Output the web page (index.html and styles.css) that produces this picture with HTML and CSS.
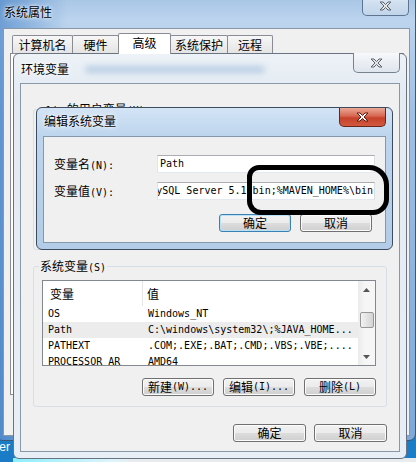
FILE: index.html
```html
<!DOCTYPE html>
<html lang="zh-CN">
<head>
    <meta charset="UTF-8">
    <title>编辑系统变量</title>
    <link rel="stylesheet" href="styles.css">
</head>
<body>
    <span class="desk-label">Computer</span>
    <div class="desk-foot"></div>

    <div class="win win-sys">
        <div class="titlebar">
            <span class="title">系统属性</span>
            <span class="close"><svg width="13" height="10" viewBox="0 0 13 10"><path d="M1 1h3l2.5 2.5L9 1h3L8 5l4 4H9L6.5 6.5 4 9H1l4-4z"/></svg></span>
        </div>
        <div class="client">
            <div class="tabs">
                <span class="tab t1">计算机名</span>
                <span class="tab t2">硬件</span>
                <span class="tab t3 active">高级</span>
                <span class="tab t4">系统保护</span>
                <span class="tab t5">远程</span>
            </div>
            <div class="tab-panel"></div>
        </div>
    </div>

    <div class="win win-env">
        <div class="titlebar">
            <span class="title">环境变量</span>
            <span class="smear"></span>
            <span class="close"><svg width="13" height="10" viewBox="0 0 13 10"><path d="M1 1h3l2.5 2.5L9 1h3L8 5l4 4H9L6.5 6.5 4 9H1l4-4z"/></svg></span>
        </div>
        <div class="client">
            <fieldset class="group group-user">
                <legend><span class="m">alin</span> 的用户变量<span class="m">(U)</span></legend>
            </fieldset>
            <fieldset class="group group-sys">
                <legend>系统变量<span class="m">(S)</span></legend>
                <div class="list">
                    <div class="grid">
                        <div class="head"><span>变量</span><span>值</span></div>
                        <div class="row m"><span>OS</span><span>Windows_NT</span></div>
                        <div class="row m sel"><span>Path</span><span>C:\windows\system32\;%JAVA_HOME...</span></div>
                        <div class="row m"><span>PATHEXT</span><span>.COM;.EXE;.BAT;.CMD;.VBS;.VBE;....</span></div>
                        <div class="row m"><span>PROCESSOR_AR</span><span>AMD64</span></div>
                    </div>
                    <div class="scrollbar">
                        <span class="sb-btn"><svg width="7" height="4" viewBox="0 0 7 4"><path d="M0 4L3.5 0 7 4z"/></svg></span>
                        <span class="sb-thumb"></span>
                        <span class="sb-btn"><svg width="7" height="4" viewBox="0 0 7 4"><path d="M0 0h7L3.5 4z"/></svg></span>
                    </div>
                </div>
                <div class="btn-row">
                    <span class="btn">新建<span class="m">(W)...</span></span>
                    <span class="btn">编辑<span class="m">(I)...</span></span>
                    <span class="btn">删除<span class="m">(L)</span></span>
                </div>
            </fieldset>
            <div class="btn-row dlg-btns">
                <span class="btn">确定</span>
                <span class="btn">取消</span>
            </div>
        </div>
    </div>

    <div class="win win-edit">
        <div class="titlebar">
            <span class="title">编辑系统变量</span>
            <span class="close close-red"><svg width="13" height="10" viewBox="0 0 13 10"><path d="M1 1h3l2.5 2.5L9 1h3L8 5l4 4H9L6.5 6.5 4 9H1l4-4z"/></svg></span>
        </div>
        <div class="client">
            <div class="field">
                <span class="label">变量名<span class="m">(N):</span></span>
                <div class="input m"><span>Path</span></div>
            </div>
            <div class="field">
                <span class="label">变量值<span class="m">(V):</span></span>
                <div class="input input-end m"><span>C:\Program Files\MySQL\MySQL Server 5.1\bin;%MAVEN_HOME%\bin</span></div>
            </div>
            <div class="btn-row edit-btns">
                <span class="btn btn-default">确定</span>
                <span class="btn">取消</span>
            </div>
        </div>
    </div>

    <div class="mark"></div>
</body>
</html>
```

FILE: styles.css
```css
* { margin: 0; padding: 0; box-sizing: border-box; }
body { width: 416px; height: 462px; overflow: hidden; position: relative; background: linear-gradient(#2b8fd8, #1a7cc6); font: 12px/14px "Noto Sans CJK SC", sans-serif; color: #000; }
.m { font: 10px/12px "DejaVu Sans Mono", monospace; }

.desk-label { position: absolute; right: 406px; top: 440px; color: #fff; font: 12px/14px "Liberation Sans", sans-serif; white-space: nowrap; }
.desk-foot { position: absolute; left: 13px; right: 0; bottom: 0; height: 4px; background: linear-gradient(90deg, #8befff, #dff4fb 25%, #e8ecef 30%, #e8ecef); }

/* windows */
.win { position: absolute; display: flex; flex-direction: column; border: 1px solid #4f5b68; border-radius: 7px; }
.titlebar { display: flex; align-items: flex-start; flex-shrink: 0; }
.title { text-shadow: 0 0 6px #fff, 0 0 3px #fff; white-space: nowrap; }
.close { margin-left: auto; width: 47px; height: 20px; display: flex; align-items: center; justify-content: center; border: 1px solid #77838f; border-top: none; border-radius: 0 0 5px 5px; background: linear-gradient(#f6f8fb, #dfe5ec); }
.close svg path { fill: #e4e4e4; stroke: #5e6570; stroke-width: 1; }
.client { flex: 1; background: #f0f0f0; border: 1px solid #8a97a6; }

/* back window: system properties */
.win-sys { left: -4px; top: -10px; width: 420px; height: 451px; padding: 0 5px 4px 6px; border-color: #3d5875; background: linear-gradient(90deg, rgba(40, 110, 190, 0.55), rgba(40, 110, 190, 0) 70px), linear-gradient(#a2c1e3, #bcd4ee 30px, #9fc0e4 120px, #7ea9d8); }
.win-sys .titlebar { height: 37px; }
.win-sys .title { margin: 14px 0 0 1px; }
.win-sys .close { margin: 5px 1px 0 auto; border-color: #5e7490; background: linear-gradient(#dbe7f4, #c0d4ea); }
.win-sys .client { padding-top: 4px; }
.tabs { display: flex; align-items: flex-end; height: 20px; margin-left: 8px; position: relative; z-index: 1; }
.tab { height: 18px; display: flex; align-items: center; justify-content: center; border: 1px solid #898c95; border-bottom: none; border-radius: 2px 2px 0 0; background: linear-gradient(#f7f7f7, #e4e4e4); margin-left: -1px; }
.tab.active { height: 21px; margin-bottom: -1px; background: #fff; padding-bottom: 2px; }
.t1 { width: 61px; margin-left: 0; }
.t2 { width: 47px; }
.t3 { width: 53px; }
.t4 { width: 58px; }
.t5 { width: 46px; }
.tab-panel { height: 342px; margin: 0 5px 0 6px; background: #fff; border: 1px solid #898c95; }

/* middle window: environment variables */
.win-env { left: 13px; top: 53px; width: 394px; height: 406px; padding: 0 6px 6px 6px; border-color: #6a7480; border-radius: 6px; background: linear-gradient(#edf2f7, #e3eaf2 40px, #e8eef5); }
.win-env .titlebar { height: 29px; }
.win-env .title { margin: 8px 0 0 1px; }
.win-env .close { margin-top: -1px; }
.smear { width: 180px; height: 7px; margin: 12px 0 0 16px; background: #8fb3d6; filter: blur(3px); opacity: 0.55; border-radius: 4px; }
.win-env .client { display: flex; flex-direction: column; padding: 0 12px 0 12px; }

.group { border: 1px solid #d5dfe5; border-radius: 3px; padding: 6px 10px 10px 8px; min-width: 0; }
.group legend { margin-left: -3px; padding: 0 1px; line-height: 13px; }
.group-user { margin-top: 18px; height: 148px; }
.group-sys { margin-top: 9px; }

.list { display: flex; height: 86px; border: 1px solid #828790; background: #fff; }
.grid { flex: 1; overflow: hidden; }
.head { display: flex; height: 25px; }
.head span { display: flex; align-items: center; }
.head span:first-child { width: 100px; padding-left: 7px; border-right: 1px solid #e5e5e5; }
.head span:last-child { padding-left: 4px; }
.row { display: flex; height: 16px; align-items: center; white-space: nowrap; }
.row span:first-child { width: 100px; padding-left: 5px; flex-shrink: 0; }
.row span:last-child { padding-left: 5px; }
.row.sel { background: #ececec; }
.scrollbar { width: 17px; display: flex; flex-direction: column; background: linear-gradient(90deg, #ebebeb, #f6f6f6 40%, #f6f6f6); }
.sb-btn { height: 17px; display: flex; align-items: center; justify-content: center; }
.sb-btn svg path { fill: #555; }
.sb-thumb { height: 16px; margin: 14px 1px auto 2px; border: 1px solid #979797; border-radius: 2px; background: linear-gradient(90deg, #f3f3f3, #e2e2e2 50%, #d4d4d4); }

.btn-row { display: flex; justify-content: flex-end; gap: 9px; margin-top: 12px; }
.btn { width: 72px; height: 18px; display: flex; align-items: center; justify-content: center; white-space: nowrap; border: 1px solid #707070; border-radius: 3px; box-shadow: inset 0 0 0 1px #fcfcfc; background: linear-gradient(#f2f2f2, #ebebeb 50%, #dddddd 50%, #cfcfcf); }
.dlg-btns { gap: 8px; margin-top: 17px; }
.dlg-btns .btn { width: 73px; }

/* front window: edit system variable */
.win-edit { left: 36px; top: 107px; width: 357px; height: 143px; padding: 0 6px 6px 6px; border-color: #3c4c5e; border-radius: 6px; background: linear-gradient(#d3e4f5, #bdd5ee 28px, #b3cce7); }
.win-edit .titlebar { height: 28px; }
.win-edit .title { margin: 6px 0 0 1px; }
.close-red { height: 19px; border-color: #6b2418; background: linear-gradient(#eaa796, #d7664f 45%, #c7412a 55%, #d05a3f); }
.close-red svg path { fill: #fff; stroke: #5a1d12; }
.win-edit .client { border-color: #8597ab; padding: 18px 10px 0 10px; }
.field { display: flex; align-items: center; height: 18px; }
.field + .field { margin-top: 9px; }
.label { width: 103px; }
.input { width: 218px; height: 18px; display: flex; align-items: center; padding: 0 1px 0 2px; overflow: hidden; white-space: nowrap; background: #fff; border: 1px solid #abadb3; border-color: #abadb3 #dbdfe6 #e3e9ef #e2e3ea; }
.input-end { justify-content: flex-end; }
.input-end span { flex-shrink: 0; }
.edit-btns { margin-top: 14px; padding-right: 3px; }
.btn-default { border-color: #3c7fb1; box-shadow: inset 0 0 0 1px #b8e2f8; }

/* hand-drawn marker round the end of the value */
.mark { position: absolute; left: 247px; top: 165px; width: 142px; height: 50px; border: 5px solid #000; border-radius: 12px 20px 16px 14px; }
```
